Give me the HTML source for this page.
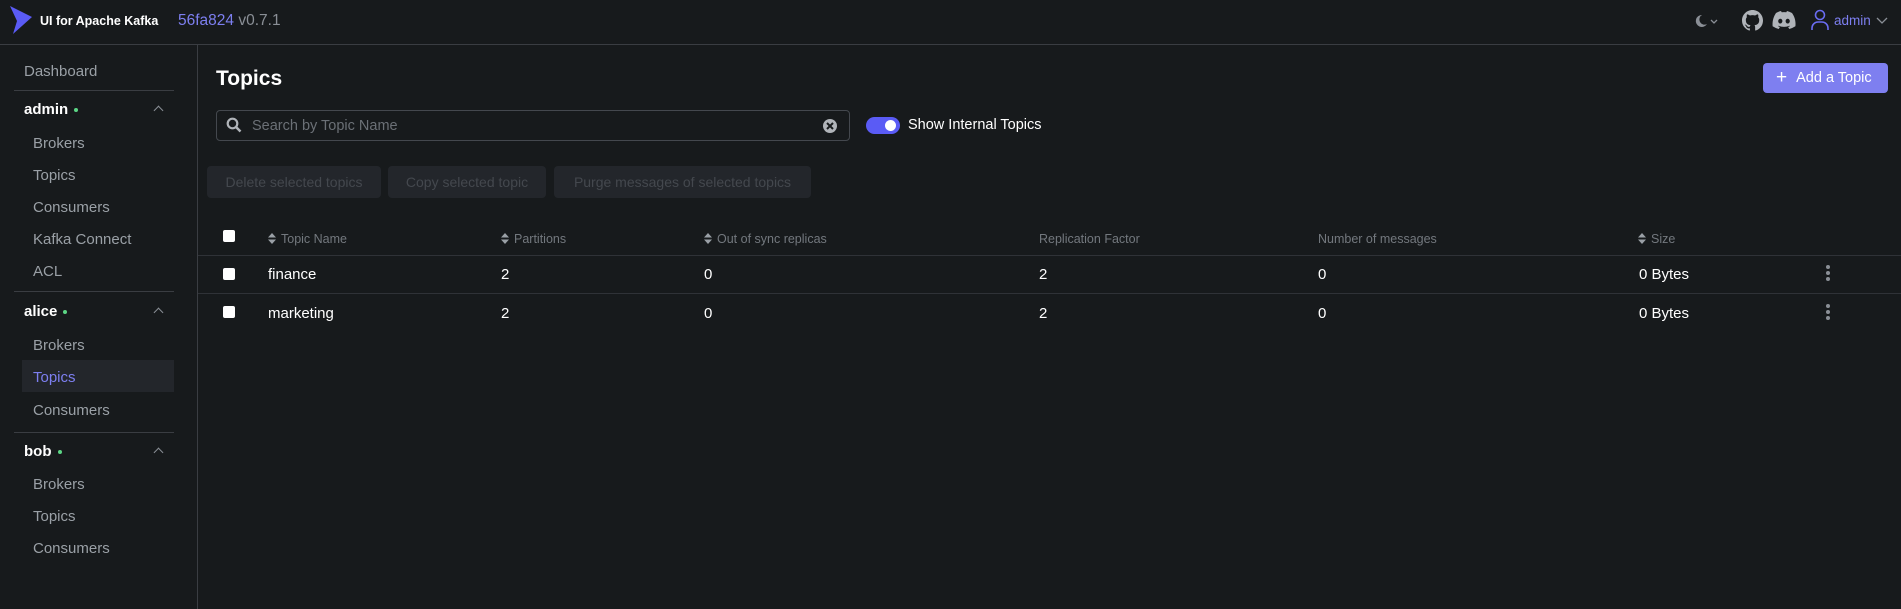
<!DOCTYPE html>
<html><head><meta charset="utf-8"><style>
*{box-sizing:border-box;margin:0;padding:0}
body{width:1901px;height:609px;background:#171A1C;font-family:"Liberation Sans",sans-serif;color:#F1F2F3;position:relative;overflow:hidden}
.a{position:absolute;white-space:nowrap}
.hdr{position:absolute;left:0;top:0;width:1901px;height:45px;border-bottom:1px solid #3a3d42}
.side{position:absolute;left:0;top:45px;width:198px;height:564px;border-right:1px solid #3a3d42}
.sep{position:absolute;left:14px;width:160px;height:1px;background:#3a3d42}
.si{font-size:15px;color:#9aa0a6;left:33px}
.cl{font-size:15px;font-weight:bold;color:#fff;left:24px}
.dot{display:inline-block;width:4px;height:4px;border-radius:2px;background:#5cd685;margin-left:6px;vertical-align:middle}
.chev{position:absolute;left:155px;width:7px;height:7px;border-left:1px solid #8a8f96;border-top:1px solid #8a8f96;transform:rotate(45deg)}
.th{font-size:12.5px;color:#73787e;top:232px}
.td{font-size:15px;color:#fff}
.btn{position:absolute;top:166px;height:32px;background:#23262B;border-radius:4px;color:#44484e;font-size:14px;line-height:32px;text-align:center}
.cb{position:absolute;width:12px;height:12px;background:#fff;border-radius:2px;left:223px}
.hl{position:absolute;left:198px;width:1703px;height:1px;background:#2F3237}
.kb{position:absolute;left:1826px;width:4px}
.kb i{display:block;width:4px;height:4px;border-radius:2px;background:#8a8f96;margin-bottom:2px}
.sort{display:inline-block;width:8px;height:11px;margin-right:5px;vertical-align:-1px}
</style></head><body>
<div class="hdr"></div>
<svg class="a" style="left:0;top:0" width="40" height="40"><polygon points="10,6 32,17 13,34 17,21" fill="#5A5BF5"/></svg>
<div class="a" style="left:40px;top:14px;font-size:12.5px;font-weight:bold;color:#fff">UI for Apache Kafka</div>
<div class="a" style="left:178px;top:12px;font-size:15.5px;color:#7d7ff0">56fa824 <span style="color:#8a8f96">v0.7.1</span></div>
<svg class="a" style="left:1693px;top:12px" width="30" height="20"><path d="M9 3a6 6 0 1 0 5 9a5 5 0 0 1-5-9z" fill="#8a8f96"/><path d="M18 8l3 3 3-3" stroke="#8a8f96" fill="none" stroke-width="1.3"/></svg>
<svg class="a" style="left:1742px;top:10px" width="21" height="21" viewBox="0 0 16 16"><path fill="#b0b4b9" d="M8 0C3.58 0 0 3.58 0 8c0 3.540 2.29 6.530 5.470 7.590.4.07.55-.17.55-.38v-1.33c-2.23.48-2.7-1.07-2.7-1.07-.36-.92-.89-1.17-.89-1.17-.73-.5.06-.49.06-.49.8.06 1.23.83 1.23.83.71 1.220 1.870.87 2.330.66.07-.52.28-.87.51-1.070-1.780-.2-3.640-.89-3.640-3.950 0-.87.31-1.59.82-2.150-.08-.2-.36-1.020.08-2.120 0 0 .67-.21 2.200.82a7.6 7.6 0 0 1 4 0c1.530-1.040 2.200-.82 2.200-.82.44 1.100.16 1.920.08 2.120.51.56.82 1.270.82 2.150 0 3.070-1.870 3.750-3.650 3.950.29.25.54.73.54 1.480v2.200c0 .21.15.46.55.38A8 8 0 0 0 16 8c0-4.420-3.580-8-8-8z"/></svg>
<svg class="a" style="left:1772px;top:11px" width="24" height="18" viewBox="0 0 24 18"><path fill="#b0b4b9" d="M20 2A19 19 0 0 0 15 0l-.7 1.3a18 18 0 0 0-4.6 0L9 0a19 19 0 0 0-5 2C1 6.5.3 11 .6 15.3A20 20 0 0 0 6.7 18l1.2-2a12 12 0 0 1-1.9-.9l.5-.4a14 14 0 0 0 11 0l.5.4a12 12 0 0 1-1.9.9l1.2 2a20 20 0 0 0 6.1-2.7C24 10.3 22.7 5.8 20 2zM8.3 12.5c-1.2 0-2.1-1.1-2.1-2.4S7.1 7.7 8.3 7.7s2.2 1.1 2.1 2.4-.9 2.4-2.1 2.4zm7.4 0c-1.2 0-2.1-1.1-2.1-2.4s.9-2.4 2.1-2.4 2.1 1.1 2.1 2.4-.9 2.4-2.1 2.4z"/></svg>
<svg class="a" style="left:1810px;top:9px" width="20" height="22"><circle cx="10" cy="6" r="4.5" stroke="#6A6CF2" stroke-width="1.6" fill="none"/><path d="M2 21v-2a6 6 0 0 1 6-6h4a6 6 0 0 1 6 6v2" stroke="#6A6CF2" stroke-width="1.6" fill="none"/></svg>
<div class="a" style="left:1834px;top:13px;font-size:13.5px;color:#7d7ff0">admin</div>
<svg class="a" style="left:1876px;top:15px" width="12" height="10"><path d="M1 3l5 5 5-5" stroke="#8a8f96" fill="none" stroke-width="1.3"/></svg>

<div class="side"></div>
<div class="a si" style="left:24px;top:63px">Dashboard</div>
<div class="sep" style="top:90px"></div>
<div class="a cl" style="top:101px">admin<span class="dot"></span></div><div class="chev" style="top:107px"></div>
<div class="a si" style="top:135px">Brokers</div>
<div class="a si" style="top:167px">Topics</div>
<div class="a si" style="top:199px">Consumers</div>
<div class="a si" style="top:231px">Kafka Connect</div>
<div class="a si" style="top:263px">ACL</div>
<div class="sep" style="top:291px"></div>
<div class="a cl" style="top:303px">alice<span class="dot"></span></div><div class="chev" style="top:309px"></div>
<div class="a si" style="top:337px">Brokers</div>
<div style="position:absolute;left:22px;top:360px;width:152px;height:32px;background:#23262B"></div>
<div class="a si" style="top:369px;color:#7d7ff0">Topics</div>
<div class="a si" style="top:402px">Consumers</div>
<div class="sep" style="top:432px"></div>
<div class="a cl" style="top:443px">bob<span class="dot"></span></div><div class="chev" style="top:449px"></div>
<div class="a si" style="top:476px">Brokers</div>
<div class="a si" style="top:508px">Topics</div>
<div class="a si" style="top:540px">Consumers</div>

<div class="a" style="left:216px;top:67px;font-size:21px;font-weight:bold;color:#fff">Topics</div>
<div class="a" style="left:1763px;top:63px;width:125px;height:30px;background:#7E7FF0;border-radius:4px;color:#fff;font-size:14.5px;line-height:30px;padding-left:13px"><span style="font-size:19px;vertical-align:-1px;margin-right:9px">+</span>Add a Topic</div>
<div class="a" style="left:216px;top:110px;width:634px;height:31px;border:1px solid #44484e;border-radius:4px"></div>
<svg class="a" style="left:226px;top:117px" width="16" height="16"><circle cx="6.5" cy="6.5" r="4.8" stroke="#b0b4b9" stroke-width="2.2" fill="none"/><path d="M10 10l4.5 4.5" stroke="#b0b4b9" stroke-width="2.5"/></svg>
<div class="a" style="left:252px;top:118px;font-size:14.5px;color:#6b7076">Search by Topic Name</div>
<svg class="a" style="left:822px;top:118px" width="16" height="16"><circle cx="8" cy="8" r="7" fill="#b0b4b9"/><path d="M5 5l6 6M11 5l-6 6" stroke="#171A1C" stroke-width="2"/></svg>
<div class="a" style="left:866px;top:117px;width:34px;height:17px;border-radius:9px;background:#5A5BF5"></div>
<div class="a" style="left:885px;top:120px;width:11px;height:11px;border-radius:6px;background:#fff"></div>
<div class="a" style="left:908px;top:117px;font-size:14.5px;color:#fff">Show Internal Topics</div>
<div class="btn" style="left:207px;width:174px">Delete selected topics</div>
<div class="btn" style="left:388px;width:158px">Copy selected topic</div>
<div class="btn" style="left:554px;width:257px">Purge messages of selected topics</div>

<div class="cb" style="top:230px"></div>
<div class="a th" style="left:268px"><svg class="sort" viewBox="0 0 8 11"><path d="M0 4.5L4 0l4 4.5zM0 6.5L4 11l4-4.5z" fill="#9aa0a6"/></svg>Topic Name</div>
<div class="a th" style="left:501px"><svg class="sort" viewBox="0 0 8 11"><path d="M0 4.5L4 0l4 4.5zM0 6.5L4 11l4-4.5z" fill="#9aa0a6"/></svg>Partitions</div>
<div class="a th" style="left:704px"><svg class="sort" viewBox="0 0 8 11"><path d="M0 4.5L4 0l4 4.5zM0 6.5L4 11l4-4.5z" fill="#9aa0a6"/></svg>Out of sync replicas</div>
<div class="a th" style="left:1039px">Replication Factor</div>
<div class="a th" style="left:1318px">Number of messages</div>
<div class="a th" style="left:1638px"><svg class="sort" viewBox="0 0 8 11"><path d="M0 4.5L4 0l4 4.5zM0 6.5L4 11l4-4.5z" fill="#9aa0a6"/></svg>Size</div>
<div class="hl" style="top:255px"></div>
<div class="hl" style="top:293px"></div>
<div class="cb" style="top:268px"></div>
<div class="a td" style="left:268px;top:266px">finance</div>
<div class="a td" style="left:501px;top:266px">2</div>
<div class="a td" style="left:704px;top:266px">0</div>
<div class="a td" style="left:1039px;top:266px">2</div>
<div class="a td" style="left:1318px;top:266px">0</div>
<div class="a td" style="left:1639px;top:266px">0 Bytes</div>
<div class="kb" style="top:265px"><i></i><i></i><i></i></div>
<div class="cb" style="top:306px"></div>
<div class="a td" style="left:268px;top:305px">marketing</div>
<div class="a td" style="left:501px;top:305px">2</div>
<div class="a td" style="left:704px;top:305px">0</div>
<div class="a td" style="left:1039px;top:305px">2</div>
<div class="a td" style="left:1318px;top:305px">0</div>
<div class="a td" style="left:1639px;top:305px">0 Bytes</div>
<div class="kb" style="top:304px"><i></i><i></i><i></i></div>
</body></html>
